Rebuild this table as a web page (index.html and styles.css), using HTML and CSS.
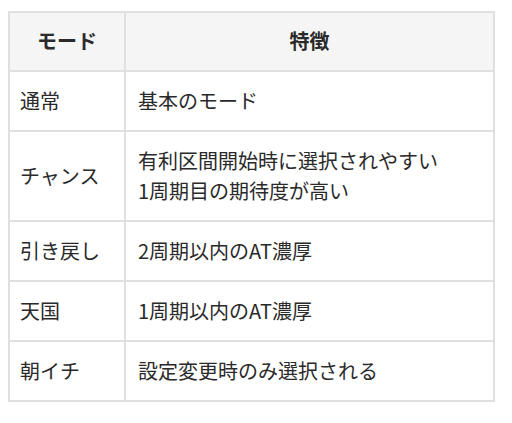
FILE: index.html
```html
<!DOCTYPE html>
<html lang="ja">
<head>
<meta charset="utf-8">
<link rel="stylesheet" href="styles.css">
</head>
<body>
<table class="modes">
  <thead>
    <tr><th class="c-mode">モード</th><th class="c-feat">特徴</th></tr>
  </thead>
  <tbody>
    <tr><td>通常</td><td>基本のモード</td></tr>
    <tr><td>チャンス</td><td>有利区間開始時に選択されやすい<br>1周期目の期待度が高い</td></tr>
    <tr><td>引き戻し</td><td>2周期以内のAT濃厚</td></tr>
    <tr><td>天国</td><td>1周期以内のAT濃厚</td></tr>
    <tr><td>朝イチ</td><td>設定変更時のみ選択される</td></tr>
  </tbody>
</table>
</body>
</html>
```
FILE: styles.css
```css
body {
  margin: 8px;
  background: #fff;
  font-family: "Noto Sans CJK JP", "Noto Sans", sans-serif;
  color: #2a2a2a;
}
.modes {
  margin-top: 3px;
  width: 487px;
  border-collapse: separate;
  border-spacing: 0;
  border-top: 2px solid #e0e0e0;
  border-left: 2px solid #e0e0e0;
  font-size: 20px;
  line-height: 30px;
}
.modes th,
.modes td {
  border-right: 2px solid #e0e0e0;
  border-bottom: 2px solid #e0e0e0;
  padding: 14px 10px 14px 12px;
  text-align: left;
  vertical-align: middle;
  font-weight: 400;
}
.modes th {
  background: #f5f5f5;
  text-align: center;
  font-weight: bold;
  padding: 13px 10px 14px;
}
.modes td:first-child {
  padding-left: 10px;
}
.c-mode {
  width: 94px;
}
```
